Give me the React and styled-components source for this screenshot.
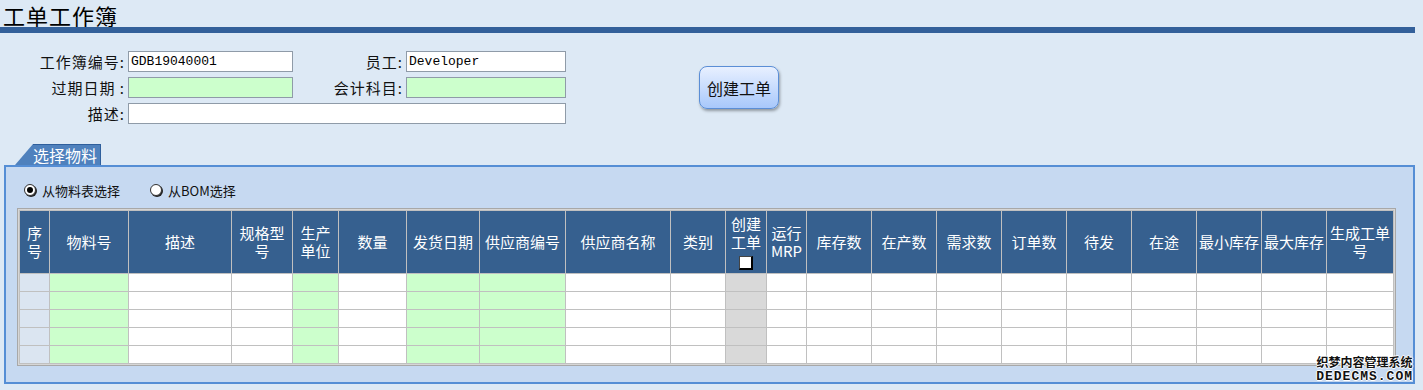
import React from 'react';
import styled, { createGlobalStyle } from 'styled-components';

const GlobalStyle = createGlobalStyle`
  body {
    margin: 0;
    background: #dde9f5;
    font-family: "Noto Sans CJK SC", "Noto Sans", sans-serif;
    color: #111;
  }
`;

const Page = styled.div`
  position: relative;
  width: 1423px;
  height: 390px;
  overflow: hidden;
`;

const Title = styled.h1`
  margin: 0;
  height: 27px;
  line-height: 31px;
  padding-left: 3px;
  font-size: 22px;
  font-weight: normal;
  letter-spacing: 1px;
  color: #000;
`;

const TitleBar = styled.div`
  position: relative;
  width: 1415px;
  height: 6px;
  background: #33609a;
`;

const Top = styled.div`
  display: flex;
  align-items: center;
  margin-top: 18px;
`;

const Form = styled.div`
  display: grid;
  grid-template-columns: 128px 165px 113px 160px;
  grid-auto-rows: 21px;
  row-gap: 5px;
`;

const Label = styled.label`
  text-align: right;
  padding-right: 3px;
  font-size: 15px;
  letter-spacing: 1px;
  line-height: 21px;
  white-space: nowrap;
`;

const Field = styled.input`
  box-sizing: border-box;
  height: 21px;
  width: 100%;
  margin: 0;
  border: 1px solid #8f9ba8;
  padding: 0 2px;
  background: ${p => (p.$required ? '#ccffcc' : '#fff')};
  font-family: "Liberation Mono", monospace;
  font-size: 13px;
  color: #000;
  grid-column: ${p => p.$span || 'auto'};
`;

const CreateButton = styled.button`
  margin-left: 133px;
  width: 80px;
  height: 43px;
  border: 1px solid #5b8ed6;
  border-radius: 8px;
  background: linear-gradient(#e8f0ff, #a8c8fb);
  box-shadow: 1px 2px 3px rgba(0, 0, 0, 0.35);
  font-family: inherit;
  font-size: 16px;
  color: #111;
  padding: 0;
`;

const Section = styled.div`
  margin-top: 20px;
`;

const Tab = styled.div`
  position: relative;
  width: max-content;
  margin-left: 33px;
  height: 21px;
  line-height: 21px;
  padding-right: 3px;
  background: #4f81bd;
  border-top: 1px solid #2f5f9c;
  border-right: 1px solid #2f5f9c;
  box-sizing: border-box;
  color: #fff;
  font-size: 16px;

  &::before {
    content: '';
    position: absolute;
    left: -18px;
    top: -1px;
    border-right: 18px solid #4f81bd;
    border-top: 21px solid transparent;
  }
`;

const Panel = styled.div`
  margin-left: 4px;
  width: 1411px;
  box-sizing: border-box;
  border: 2px solid #558ed5;
  background: #c6d9f1;
  padding: 15px 11px 16px;
`;

const RadioRow = styled.div`
  display: flex;
  align-items: center;
  height: 16px;
  padding-left: 7px;
  font-size: 13px;
`;

const RadioItem = styled.span`
  display: flex;
  align-items: center;
  gap: 6px;
  margin-right: ${p => p.$gap || 0}px;
`;

const RadioDot = styled.span`
  position: relative;
  width: 12px;
  height: 12px;
  box-sizing: border-box;
  border-radius: 50%;
  border: 1px solid #333;
  background: #fff;
  box-shadow: 1px 1px 0 #222;

  &::after {
    content: '';
    display: ${p => (p.$on ? 'block' : 'none')};
    position: absolute;
    left: 2px;
    top: 2px;
    width: 6px;
    height: 6px;
    border-radius: 50%;
    background: #000;
  }
`;

const TableFrame = styled.div`
  width: max-content;
  margin-top: 10px;
  border: 1px solid #a8a8a8;
  padding: 1px;
  background: #d6d6d6;
`;

const Grid = styled.table`
  border-collapse: collapse;
  table-layout: fixed;
  width: 1375px;
`;

const Th = styled.th`
  background: #36608f;
  color: #fff;
  font-size: 15px;
  font-weight: normal;
  line-height: 18px;
  border: 1px solid #c0c0c0;
  padding: 0 2px;
  height: 62px;
  text-align: center;
  vertical-align: middle;
  overflow: hidden;
`;

const Td = styled.td`
  height: 17px;
  padding: 0;
  border: 1px solid #c0c0c0;
  background: ${p => p.$bg || '#fff'};
`;

const Check = styled.span`
  display: block;
  margin: 5px auto 0;
  width: 14px;
  height: 14px;
  box-sizing: border-box;
  background: #fff;
  border-top: 1px solid #444;
  border-left: 1px solid #444;
  border-right: 2px solid #000;
  border-bottom: 2px solid #000;
`;

const Watermark = styled.div`
  position: absolute;
  right: 10px;
  top: 354px;
  text-align: center;
  font-weight: bold;
  color: #111;
  text-shadow: -1px 0 #fff, 1px 0 #fff, 0 -1px #fff, 0 1px #fff;
`;

const MarkCn = styled.div`
  font-size: 12px;
  line-height: 16px;
`;

const MarkEn = styled.div`
  font-family: "Liberation Mono", monospace;
  font-size: 13px;
  line-height: 13px;
  letter-spacing: 1px;
`;

const WHITE = '#fff';
const GREEN = '#ccffcc';
const GREY = '#d9d9d9';
const SEQ = '#dbe5f1';

const columns = [
  { title: '序号', width: 30, bg: SEQ },
  { title: '物料号', width: 79, bg: GREEN },
  { title: '描述', width: 103, bg: WHITE },
  { title: '规格型号', width: 61, bg: WHITE },
  { title: '生产单位', width: 46, bg: GREEN },
  { title: '数量', width: 68, bg: WHITE },
  { title: '发货日期', width: 73, bg: GREEN },
  { title: '供应商编号', width: 86, bg: GREEN },
  { title: '供应商名称', width: 105, bg: WHITE },
  { title: '类别', width: 55, bg: WHITE },
  { title: '创建工单', width: 41, bg: GREY, check: true },
  { title: '运行MRP', width: 40, bg: WHITE },
  { title: '库存数', width: 65, bg: WHITE },
  { title: '在产数', width: 65, bg: WHITE },
  { title: '需求数', width: 65, bg: WHITE },
  { title: '订单数', width: 65, bg: WHITE },
  { title: '待发', width: 65, bg: WHITE },
  { title: '在途', width: 65, bg: WHITE },
  { title: '最小库存', width: 65, bg: WHITE },
  { title: '最大库存', width: 65, bg: WHITE },
  { title: '生成工单号', width: 67, bg: WHITE },
];

const rows = [1, 2, 3, 4, 5];

export default function App() {
  return (
    <Page>
      <GlobalStyle />
      <Title>工单工作簿</Title>
      <TitleBar />

      <Top>
        <Form>
          <Label>工作簿编号:</Label>
          <Field defaultValue="GDB19040001" />
          <Label>员工:</Label>
          <Field defaultValue="Developer" />

          <Label>过期日期 :</Label>
          <Field $required />
          <Label>会计科目:</Label>
          <Field $required />

          <Label>描述:</Label>
          <Field $span="2 / span 3" />
        </Form>
        <CreateButton>创建工单</CreateButton>
      </Top>

      <Section>
        <Tab>选择物料</Tab>
        <Panel>
          <RadioRow>
            <RadioItem $gap={30}>
              <RadioDot $on />
              从物料表选择
            </RadioItem>
            <RadioItem>
              <RadioDot />
              从BOM选择
            </RadioItem>
          </RadioRow>

          <TableFrame>
            <Grid>
              <colgroup>
                {columns.map(c => (
                  <col key={c.title} style={{ width: c.width }} />
                ))}
              </colgroup>
              <thead>
                <tr>
                  {columns.map(c => (
                    <Th key={c.title}>
                      {c.title}
                      {c.check && <Check />}
                    </Th>
                  ))}
                </tr>
              </thead>
              <tbody>
                {rows.map(r => (
                  <tr key={r}>
                    {columns.map(c => (
                      <Td key={c.title} $bg={c.bg} />
                    ))}
                  </tr>
                ))}
              </tbody>
            </Grid>
          </TableFrame>
        </Panel>
      </Section>

      <Watermark>
        <MarkCn>织梦内容管理系统</MarkCn>
        <MarkEn>DEDECMS.COM</MarkEn>
      </Watermark>
    </Page>
  );
}
